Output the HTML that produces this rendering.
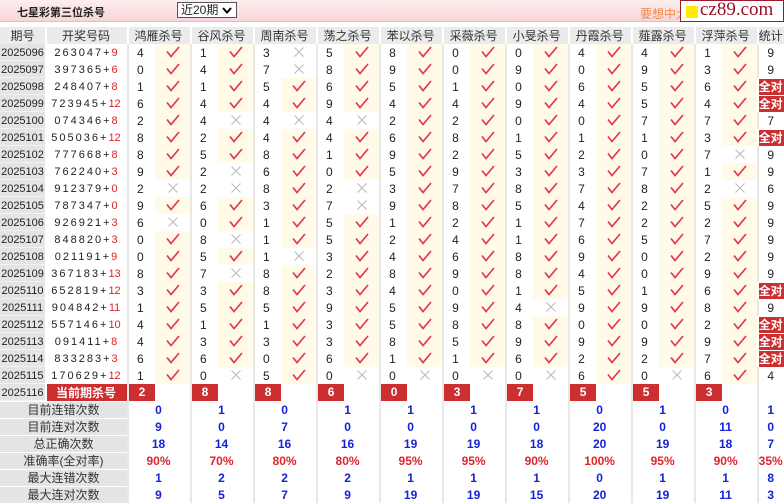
<!DOCTYPE html>
<html><head><meta charset="utf-8">
<style>
*{margin:0;padding:0;box-sizing:border-box}
body{width:784px;height:503px;overflow:hidden;background:#fff;font-family:"Liberation Sans","Noto Sans CJK SC",sans-serif;font-size:12px;color:#222;position:relative}
.top{position:absolute;left:0;top:0;width:784px;height:22px;background:linear-gradient(#fdeeee,#f6d6d8);border-bottom:1px solid #e9b9bd}
.title{position:absolute;left:17px;top:4px;font-weight:bold;font-size:11px;color:#222}
.sel{position:absolute;left:177px;top:2px;width:60px;height:16px;border:1px solid #555;background:#fff;font-size:12px;line-height:14px;padding-left:3px}
.sel svg{position:absolute;right:4px;top:4px}
.ad{position:absolute;left:640px;top:5px;color:#f08a4a;font-size:12px}
.logo{position:absolute;left:680px;top:0;width:104px;height:22px;border:1px solid #9a1b2c;background:#fff;overflow:hidden}
.logo i{position:absolute;left:5px;top:5px;width:12px;height:12px;background:#ffee00}
.logo span{position:absolute;left:19px;top:-1px;font-family:"Liberation Serif",serif;font-size:19px;color:#9a1024;line-height:20px}
table{position:absolute;left:0;top:27px;border-collapse:collapse;table-layout:fixed;width:784px}
tr{height:17px}
td,th{height:17px;padding:0;white-space:nowrap;overflow:hidden;line-height:16px;font-size:12px}
th{font-weight:normal;background:#ebebeb;color:#333;box-shadow:inset 2px 0 0 #fff}
.q{background:#e4e4e4;text-align:center;font-size:11px;box-shadow:inset 0 -1px 0 #f3f3f3}
.k{text-align:center;font-size:11px;letter-spacing:2px}
.k i{font-style:normal;color:#d22;letter-spacing:0}
.n{padding-left:10px;box-shadow:inset 2px 0 0 #e8e8e6}
.y{background:#fffbe8;text-align:center}
.x{text-align:center}
svg.m{display:inline-block;vertical-align:middle;margin-top:-2px}
.t{text-align:center;box-shadow:inset 2px 0 0 #e8e8e6}
.a{background:#cc2f2f;color:#fff;font-weight:bold;text-align:center;box-shadow:inset 2px 1px 0 #fff}
.cur{background:#cc2f2f;color:#fff;font-weight:bold;text-align:center;box-shadow:inset 2px 0 0 #fff}
.kn{box-shadow:inset 2px 0 0 #e8e8e6;padding-left:2px}
.kn b{display:block;background:#cc2f2f;color:#fff;width:26px;text-align:center;height:17px;line-height:17px}
.lab{background:#e4e4e4;text-align:center;box-shadow:inset 0 1px 0 #fff;color:#333}
.v{text-align:center;font-weight:bold;color:#1522d6;box-shadow:inset 2px 0 0 #e8e8e6}
.r{color:#e0242a}
</style></head><body>
<svg width="0" height="0" style="position:absolute">
<symbol id="c" viewBox="0 0 14 12"><path d="M1 5.5 L5 10.5 L13 1" fill="none" stroke="#e4384e" stroke-width="1.7"/></symbol>
<symbol id="w" viewBox="0 0 12 12"><path d="M1.5 1.5 L10.5 10.5 M10.5 1.5 L1.5 10.5" fill="none" stroke="#b8b8b8" stroke-width="1"/></symbol>
</svg>
<div class="top"><div class="title">七星彩第三位杀号</div><div class="sel">近20期<svg width="10" height="7"><path d="M1 1 L5 5.5 L9 1" fill="none" stroke="#000" stroke-width="2"/></svg></div><div class="ad">要想中大</div><div class="logo"><i></i><span>cz89.com</span></div></div>
<table>
<colgroup><col style="width:45px"><col style="width:82px"><col style="width:28px"><col style="width:35px"><col style="width:28px"><col style="width:35px"><col style="width:28px"><col style="width:35px"><col style="width:28px"><col style="width:35px"><col style="width:28px"><col style="width:35px"><col style="width:28px"><col style="width:35px"><col style="width:28px"><col style="width:35px"><col style="width:28px"><col style="width:35px"><col style="width:28px"><col style="width:35px"><col style="width:28px"><col style="width:35px"><col style="width:27px"></colgroup>
<tr><th style="box-shadow:none">期号</th><th>开奖号码</th><th colspan="2">鸿雁杀号</th><th colspan="2">谷风杀号</th><th colspan="2">周南杀号</th><th colspan="2">荡之杀号</th><th colspan="2">苯以杀号</th><th colspan="2">采薇杀号</th><th colspan="2">小旻杀号</th><th colspan="2">丹霞杀号</th><th colspan="2">薤露杀号</th><th colspan="2">浮萍杀号</th><th>统计</th></tr>
<tr><td class="q">2025096</td><td class="k">263047+<i>9</i></td><td class="n">4</td><td class="y"><svg class="m" width="14" height="12"><use href="#c"/></svg></td><td class="n">1</td><td class="y"><svg class="m" width="14" height="12"><use href="#c"/></svg></td><td class="n">3</td><td class="x"><svg class="m" width="12" height="12"><use href="#w"/></svg></td><td class="n">5</td><td class="y"><svg class="m" width="14" height="12"><use href="#c"/></svg></td><td class="n">8</td><td class="y"><svg class="m" width="14" height="12"><use href="#c"/></svg></td><td class="n">0</td><td class="y"><svg class="m" width="14" height="12"><use href="#c"/></svg></td><td class="n">0</td><td class="y"><svg class="m" width="14" height="12"><use href="#c"/></svg></td><td class="n">4</td><td class="y"><svg class="m" width="14" height="12"><use href="#c"/></svg></td><td class="n">4</td><td class="y"><svg class="m" width="14" height="12"><use href="#c"/></svg></td><td class="n">1</td><td class="y"><svg class="m" width="14" height="12"><use href="#c"/></svg></td><td class="t">9</td></tr>
<tr><td class="q">2025097</td><td class="k">397365+<i>6</i></td><td class="n">0</td><td class="y"><svg class="m" width="14" height="12"><use href="#c"/></svg></td><td class="n">4</td><td class="y"><svg class="m" width="14" height="12"><use href="#c"/></svg></td><td class="n">7</td><td class="x"><svg class="m" width="12" height="12"><use href="#w"/></svg></td><td class="n">8</td><td class="y"><svg class="m" width="14" height="12"><use href="#c"/></svg></td><td class="n">9</td><td class="y"><svg class="m" width="14" height="12"><use href="#c"/></svg></td><td class="n">0</td><td class="y"><svg class="m" width="14" height="12"><use href="#c"/></svg></td><td class="n">9</td><td class="y"><svg class="m" width="14" height="12"><use href="#c"/></svg></td><td class="n">0</td><td class="y"><svg class="m" width="14" height="12"><use href="#c"/></svg></td><td class="n">9</td><td class="y"><svg class="m" width="14" height="12"><use href="#c"/></svg></td><td class="n">3</td><td class="y"><svg class="m" width="14" height="12"><use href="#c"/></svg></td><td class="t">9</td></tr>
<tr><td class="q">2025098</td><td class="k">248407+<i>8</i></td><td class="n">1</td><td class="y"><svg class="m" width="14" height="12"><use href="#c"/></svg></td><td class="n">1</td><td class="y"><svg class="m" width="14" height="12"><use href="#c"/></svg></td><td class="n">5</td><td class="y"><svg class="m" width="14" height="12"><use href="#c"/></svg></td><td class="n">6</td><td class="y"><svg class="m" width="14" height="12"><use href="#c"/></svg></td><td class="n">5</td><td class="y"><svg class="m" width="14" height="12"><use href="#c"/></svg></td><td class="n">1</td><td class="y"><svg class="m" width="14" height="12"><use href="#c"/></svg></td><td class="n">0</td><td class="y"><svg class="m" width="14" height="12"><use href="#c"/></svg></td><td class="n">6</td><td class="y"><svg class="m" width="14" height="12"><use href="#c"/></svg></td><td class="n">5</td><td class="y"><svg class="m" width="14" height="12"><use href="#c"/></svg></td><td class="n">6</td><td class="y"><svg class="m" width="14" height="12"><use href="#c"/></svg></td><td class="a">全对</td></tr>
<tr><td class="q">2025099</td><td class="k">723945+<i>12</i></td><td class="n">6</td><td class="y"><svg class="m" width="14" height="12"><use href="#c"/></svg></td><td class="n">4</td><td class="y"><svg class="m" width="14" height="12"><use href="#c"/></svg></td><td class="n">4</td><td class="y"><svg class="m" width="14" height="12"><use href="#c"/></svg></td><td class="n">9</td><td class="y"><svg class="m" width="14" height="12"><use href="#c"/></svg></td><td class="n">4</td><td class="y"><svg class="m" width="14" height="12"><use href="#c"/></svg></td><td class="n">4</td><td class="y"><svg class="m" width="14" height="12"><use href="#c"/></svg></td><td class="n">9</td><td class="y"><svg class="m" width="14" height="12"><use href="#c"/></svg></td><td class="n">4</td><td class="y"><svg class="m" width="14" height="12"><use href="#c"/></svg></td><td class="n">5</td><td class="y"><svg class="m" width="14" height="12"><use href="#c"/></svg></td><td class="n">4</td><td class="y"><svg class="m" width="14" height="12"><use href="#c"/></svg></td><td class="a">全对</td></tr>
<tr><td class="q">2025100</td><td class="k">074346+<i>8</i></td><td class="n">2</td><td class="y"><svg class="m" width="14" height="12"><use href="#c"/></svg></td><td class="n">4</td><td class="x"><svg class="m" width="12" height="12"><use href="#w"/></svg></td><td class="n">4</td><td class="x"><svg class="m" width="12" height="12"><use href="#w"/></svg></td><td class="n">4</td><td class="x"><svg class="m" width="12" height="12"><use href="#w"/></svg></td><td class="n">2</td><td class="y"><svg class="m" width="14" height="12"><use href="#c"/></svg></td><td class="n">2</td><td class="y"><svg class="m" width="14" height="12"><use href="#c"/></svg></td><td class="n">0</td><td class="y"><svg class="m" width="14" height="12"><use href="#c"/></svg></td><td class="n">0</td><td class="y"><svg class="m" width="14" height="12"><use href="#c"/></svg></td><td class="n">7</td><td class="y"><svg class="m" width="14" height="12"><use href="#c"/></svg></td><td class="n">7</td><td class="y"><svg class="m" width="14" height="12"><use href="#c"/></svg></td><td class="t">7</td></tr>
<tr><td class="q">2025101</td><td class="k">505036+<i>12</i></td><td class="n">8</td><td class="y"><svg class="m" width="14" height="12"><use href="#c"/></svg></td><td class="n">2</td><td class="y"><svg class="m" width="14" height="12"><use href="#c"/></svg></td><td class="n">4</td><td class="y"><svg class="m" width="14" height="12"><use href="#c"/></svg></td><td class="n">4</td><td class="y"><svg class="m" width="14" height="12"><use href="#c"/></svg></td><td class="n">6</td><td class="y"><svg class="m" width="14" height="12"><use href="#c"/></svg></td><td class="n">8</td><td class="y"><svg class="m" width="14" height="12"><use href="#c"/></svg></td><td class="n">1</td><td class="y"><svg class="m" width="14" height="12"><use href="#c"/></svg></td><td class="n">1</td><td class="y"><svg class="m" width="14" height="12"><use href="#c"/></svg></td><td class="n">1</td><td class="y"><svg class="m" width="14" height="12"><use href="#c"/></svg></td><td class="n">3</td><td class="y"><svg class="m" width="14" height="12"><use href="#c"/></svg></td><td class="a">全对</td></tr>
<tr><td class="q">2025102</td><td class="k">777668+<i>8</i></td><td class="n">8</td><td class="y"><svg class="m" width="14" height="12"><use href="#c"/></svg></td><td class="n">5</td><td class="y"><svg class="m" width="14" height="12"><use href="#c"/></svg></td><td class="n">8</td><td class="y"><svg class="m" width="14" height="12"><use href="#c"/></svg></td><td class="n">1</td><td class="y"><svg class="m" width="14" height="12"><use href="#c"/></svg></td><td class="n">9</td><td class="y"><svg class="m" width="14" height="12"><use href="#c"/></svg></td><td class="n">2</td><td class="y"><svg class="m" width="14" height="12"><use href="#c"/></svg></td><td class="n">5</td><td class="y"><svg class="m" width="14" height="12"><use href="#c"/></svg></td><td class="n">2</td><td class="y"><svg class="m" width="14" height="12"><use href="#c"/></svg></td><td class="n">0</td><td class="y"><svg class="m" width="14" height="12"><use href="#c"/></svg></td><td class="n">7</td><td class="x"><svg class="m" width="12" height="12"><use href="#w"/></svg></td><td class="t">9</td></tr>
<tr><td class="q">2025103</td><td class="k">762240+<i>3</i></td><td class="n">9</td><td class="y"><svg class="m" width="14" height="12"><use href="#c"/></svg></td><td class="n">2</td><td class="x"><svg class="m" width="12" height="12"><use href="#w"/></svg></td><td class="n">6</td><td class="y"><svg class="m" width="14" height="12"><use href="#c"/></svg></td><td class="n">0</td><td class="y"><svg class="m" width="14" height="12"><use href="#c"/></svg></td><td class="n">5</td><td class="y"><svg class="m" width="14" height="12"><use href="#c"/></svg></td><td class="n">9</td><td class="y"><svg class="m" width="14" height="12"><use href="#c"/></svg></td><td class="n">3</td><td class="y"><svg class="m" width="14" height="12"><use href="#c"/></svg></td><td class="n">3</td><td class="y"><svg class="m" width="14" height="12"><use href="#c"/></svg></td><td class="n">7</td><td class="y"><svg class="m" width="14" height="12"><use href="#c"/></svg></td><td class="n">1</td><td class="y"><svg class="m" width="14" height="12"><use href="#c"/></svg></td><td class="t">9</td></tr>
<tr><td class="q">2025104</td><td class="k">912379+<i>0</i></td><td class="n">2</td><td class="x"><svg class="m" width="12" height="12"><use href="#w"/></svg></td><td class="n">2</td><td class="x"><svg class="m" width="12" height="12"><use href="#w"/></svg></td><td class="n">8</td><td class="y"><svg class="m" width="14" height="12"><use href="#c"/></svg></td><td class="n">2</td><td class="x"><svg class="m" width="12" height="12"><use href="#w"/></svg></td><td class="n">3</td><td class="y"><svg class="m" width="14" height="12"><use href="#c"/></svg></td><td class="n">7</td><td class="y"><svg class="m" width="14" height="12"><use href="#c"/></svg></td><td class="n">8</td><td class="y"><svg class="m" width="14" height="12"><use href="#c"/></svg></td><td class="n">7</td><td class="y"><svg class="m" width="14" height="12"><use href="#c"/></svg></td><td class="n">8</td><td class="y"><svg class="m" width="14" height="12"><use href="#c"/></svg></td><td class="n">2</td><td class="x"><svg class="m" width="12" height="12"><use href="#w"/></svg></td><td class="t">6</td></tr>
<tr><td class="q">2025105</td><td class="k">787347+<i>0</i></td><td class="n">9</td><td class="y"><svg class="m" width="14" height="12"><use href="#c"/></svg></td><td class="n">6</td><td class="y"><svg class="m" width="14" height="12"><use href="#c"/></svg></td><td class="n">3</td><td class="y"><svg class="m" width="14" height="12"><use href="#c"/></svg></td><td class="n">7</td><td class="x"><svg class="m" width="12" height="12"><use href="#w"/></svg></td><td class="n">9</td><td class="y"><svg class="m" width="14" height="12"><use href="#c"/></svg></td><td class="n">8</td><td class="y"><svg class="m" width="14" height="12"><use href="#c"/></svg></td><td class="n">5</td><td class="y"><svg class="m" width="14" height="12"><use href="#c"/></svg></td><td class="n">4</td><td class="y"><svg class="m" width="14" height="12"><use href="#c"/></svg></td><td class="n">2</td><td class="y"><svg class="m" width="14" height="12"><use href="#c"/></svg></td><td class="n">5</td><td class="y"><svg class="m" width="14" height="12"><use href="#c"/></svg></td><td class="t">9</td></tr>
<tr><td class="q">2025106</td><td class="k">926921+<i>3</i></td><td class="n">6</td><td class="x"><svg class="m" width="12" height="12"><use href="#w"/></svg></td><td class="n">0</td><td class="y"><svg class="m" width="14" height="12"><use href="#c"/></svg></td><td class="n">1</td><td class="y"><svg class="m" width="14" height="12"><use href="#c"/></svg></td><td class="n">5</td><td class="y"><svg class="m" width="14" height="12"><use href="#c"/></svg></td><td class="n">1</td><td class="y"><svg class="m" width="14" height="12"><use href="#c"/></svg></td><td class="n">2</td><td class="y"><svg class="m" width="14" height="12"><use href="#c"/></svg></td><td class="n">1</td><td class="y"><svg class="m" width="14" height="12"><use href="#c"/></svg></td><td class="n">7</td><td class="y"><svg class="m" width="14" height="12"><use href="#c"/></svg></td><td class="n">2</td><td class="y"><svg class="m" width="14" height="12"><use href="#c"/></svg></td><td class="n">2</td><td class="y"><svg class="m" width="14" height="12"><use href="#c"/></svg></td><td class="t">9</td></tr>
<tr><td class="q">2025107</td><td class="k">848820+<i>3</i></td><td class="n">0</td><td class="y"><svg class="m" width="14" height="12"><use href="#c"/></svg></td><td class="n">8</td><td class="x"><svg class="m" width="12" height="12"><use href="#w"/></svg></td><td class="n">1</td><td class="y"><svg class="m" width="14" height="12"><use href="#c"/></svg></td><td class="n">5</td><td class="y"><svg class="m" width="14" height="12"><use href="#c"/></svg></td><td class="n">2</td><td class="y"><svg class="m" width="14" height="12"><use href="#c"/></svg></td><td class="n">4</td><td class="y"><svg class="m" width="14" height="12"><use href="#c"/></svg></td><td class="n">1</td><td class="y"><svg class="m" width="14" height="12"><use href="#c"/></svg></td><td class="n">6</td><td class="y"><svg class="m" width="14" height="12"><use href="#c"/></svg></td><td class="n">5</td><td class="y"><svg class="m" width="14" height="12"><use href="#c"/></svg></td><td class="n">7</td><td class="y"><svg class="m" width="14" height="12"><use href="#c"/></svg></td><td class="t">9</td></tr>
<tr><td class="q">2025108</td><td class="k">021191+<i>9</i></td><td class="n">0</td><td class="y"><svg class="m" width="14" height="12"><use href="#c"/></svg></td><td class="n">5</td><td class="y"><svg class="m" width="14" height="12"><use href="#c"/></svg></td><td class="n">1</td><td class="x"><svg class="m" width="12" height="12"><use href="#w"/></svg></td><td class="n">3</td><td class="y"><svg class="m" width="14" height="12"><use href="#c"/></svg></td><td class="n">4</td><td class="y"><svg class="m" width="14" height="12"><use href="#c"/></svg></td><td class="n">6</td><td class="y"><svg class="m" width="14" height="12"><use href="#c"/></svg></td><td class="n">8</td><td class="y"><svg class="m" width="14" height="12"><use href="#c"/></svg></td><td class="n">9</td><td class="y"><svg class="m" width="14" height="12"><use href="#c"/></svg></td><td class="n">0</td><td class="y"><svg class="m" width="14" height="12"><use href="#c"/></svg></td><td class="n">2</td><td class="y"><svg class="m" width="14" height="12"><use href="#c"/></svg></td><td class="t">9</td></tr>
<tr><td class="q">2025109</td><td class="k">367183+<i>13</i></td><td class="n">8</td><td class="y"><svg class="m" width="14" height="12"><use href="#c"/></svg></td><td class="n">7</td><td class="x"><svg class="m" width="12" height="12"><use href="#w"/></svg></td><td class="n">8</td><td class="y"><svg class="m" width="14" height="12"><use href="#c"/></svg></td><td class="n">2</td><td class="y"><svg class="m" width="14" height="12"><use href="#c"/></svg></td><td class="n">8</td><td class="y"><svg class="m" width="14" height="12"><use href="#c"/></svg></td><td class="n">9</td><td class="y"><svg class="m" width="14" height="12"><use href="#c"/></svg></td><td class="n">8</td><td class="y"><svg class="m" width="14" height="12"><use href="#c"/></svg></td><td class="n">4</td><td class="y"><svg class="m" width="14" height="12"><use href="#c"/></svg></td><td class="n">0</td><td class="y"><svg class="m" width="14" height="12"><use href="#c"/></svg></td><td class="n">9</td><td class="y"><svg class="m" width="14" height="12"><use href="#c"/></svg></td><td class="t">9</td></tr>
<tr><td class="q">2025110</td><td class="k">652819+<i>12</i></td><td class="n">3</td><td class="y"><svg class="m" width="14" height="12"><use href="#c"/></svg></td><td class="n">3</td><td class="y"><svg class="m" width="14" height="12"><use href="#c"/></svg></td><td class="n">8</td><td class="y"><svg class="m" width="14" height="12"><use href="#c"/></svg></td><td class="n">3</td><td class="y"><svg class="m" width="14" height="12"><use href="#c"/></svg></td><td class="n">4</td><td class="y"><svg class="m" width="14" height="12"><use href="#c"/></svg></td><td class="n">0</td><td class="y"><svg class="m" width="14" height="12"><use href="#c"/></svg></td><td class="n">1</td><td class="y"><svg class="m" width="14" height="12"><use href="#c"/></svg></td><td class="n">5</td><td class="y"><svg class="m" width="14" height="12"><use href="#c"/></svg></td><td class="n">1</td><td class="y"><svg class="m" width="14" height="12"><use href="#c"/></svg></td><td class="n">6</td><td class="y"><svg class="m" width="14" height="12"><use href="#c"/></svg></td><td class="a">全对</td></tr>
<tr><td class="q">2025111</td><td class="k">904842+<i>11</i></td><td class="n">1</td><td class="y"><svg class="m" width="14" height="12"><use href="#c"/></svg></td><td class="n">5</td><td class="y"><svg class="m" width="14" height="12"><use href="#c"/></svg></td><td class="n">5</td><td class="y"><svg class="m" width="14" height="12"><use href="#c"/></svg></td><td class="n">9</td><td class="y"><svg class="m" width="14" height="12"><use href="#c"/></svg></td><td class="n">5</td><td class="y"><svg class="m" width="14" height="12"><use href="#c"/></svg></td><td class="n">9</td><td class="y"><svg class="m" width="14" height="12"><use href="#c"/></svg></td><td class="n">4</td><td class="x"><svg class="m" width="12" height="12"><use href="#w"/></svg></td><td class="n">9</td><td class="y"><svg class="m" width="14" height="12"><use href="#c"/></svg></td><td class="n">9</td><td class="y"><svg class="m" width="14" height="12"><use href="#c"/></svg></td><td class="n">8</td><td class="y"><svg class="m" width="14" height="12"><use href="#c"/></svg></td><td class="t">9</td></tr>
<tr><td class="q">2025112</td><td class="k">557146+<i>10</i></td><td class="n">4</td><td class="y"><svg class="m" width="14" height="12"><use href="#c"/></svg></td><td class="n">1</td><td class="y"><svg class="m" width="14" height="12"><use href="#c"/></svg></td><td class="n">1</td><td class="y"><svg class="m" width="14" height="12"><use href="#c"/></svg></td><td class="n">3</td><td class="y"><svg class="m" width="14" height="12"><use href="#c"/></svg></td><td class="n">5</td><td class="y"><svg class="m" width="14" height="12"><use href="#c"/></svg></td><td class="n">8</td><td class="y"><svg class="m" width="14" height="12"><use href="#c"/></svg></td><td class="n">8</td><td class="y"><svg class="m" width="14" height="12"><use href="#c"/></svg></td><td class="n">0</td><td class="y"><svg class="m" width="14" height="12"><use href="#c"/></svg></td><td class="n">0</td><td class="y"><svg class="m" width="14" height="12"><use href="#c"/></svg></td><td class="n">2</td><td class="y"><svg class="m" width="14" height="12"><use href="#c"/></svg></td><td class="a">全对</td></tr>
<tr><td class="q">2025113</td><td class="k">091411+<i>8</i></td><td class="n">4</td><td class="y"><svg class="m" width="14" height="12"><use href="#c"/></svg></td><td class="n">3</td><td class="y"><svg class="m" width="14" height="12"><use href="#c"/></svg></td><td class="n">3</td><td class="y"><svg class="m" width="14" height="12"><use href="#c"/></svg></td><td class="n">3</td><td class="y"><svg class="m" width="14" height="12"><use href="#c"/></svg></td><td class="n">8</td><td class="y"><svg class="m" width="14" height="12"><use href="#c"/></svg></td><td class="n">5</td><td class="y"><svg class="m" width="14" height="12"><use href="#c"/></svg></td><td class="n">9</td><td class="y"><svg class="m" width="14" height="12"><use href="#c"/></svg></td><td class="n">9</td><td class="y"><svg class="m" width="14" height="12"><use href="#c"/></svg></td><td class="n">9</td><td class="y"><svg class="m" width="14" height="12"><use href="#c"/></svg></td><td class="n">9</td><td class="y"><svg class="m" width="14" height="12"><use href="#c"/></svg></td><td class="a">全对</td></tr>
<tr><td class="q">2025114</td><td class="k">833283+<i>3</i></td><td class="n">6</td><td class="y"><svg class="m" width="14" height="12"><use href="#c"/></svg></td><td class="n">6</td><td class="y"><svg class="m" width="14" height="12"><use href="#c"/></svg></td><td class="n">0</td><td class="y"><svg class="m" width="14" height="12"><use href="#c"/></svg></td><td class="n">6</td><td class="y"><svg class="m" width="14" height="12"><use href="#c"/></svg></td><td class="n">1</td><td class="y"><svg class="m" width="14" height="12"><use href="#c"/></svg></td><td class="n">1</td><td class="y"><svg class="m" width="14" height="12"><use href="#c"/></svg></td><td class="n">6</td><td class="y"><svg class="m" width="14" height="12"><use href="#c"/></svg></td><td class="n">2</td><td class="y"><svg class="m" width="14" height="12"><use href="#c"/></svg></td><td class="n">2</td><td class="y"><svg class="m" width="14" height="12"><use href="#c"/></svg></td><td class="n">7</td><td class="y"><svg class="m" width="14" height="12"><use href="#c"/></svg></td><td class="a">全对</td></tr>
<tr><td class="q">2025115</td><td class="k">170629+<i>12</i></td><td class="n">1</td><td class="y"><svg class="m" width="14" height="12"><use href="#c"/></svg></td><td class="n">0</td><td class="x"><svg class="m" width="12" height="12"><use href="#w"/></svg></td><td class="n">5</td><td class="y"><svg class="m" width="14" height="12"><use href="#c"/></svg></td><td class="n">0</td><td class="x"><svg class="m" width="12" height="12"><use href="#w"/></svg></td><td class="n">0</td><td class="x"><svg class="m" width="12" height="12"><use href="#w"/></svg></td><td class="n">0</td><td class="x"><svg class="m" width="12" height="12"><use href="#w"/></svg></td><td class="n">0</td><td class="x"><svg class="m" width="12" height="12"><use href="#w"/></svg></td><td class="n">6</td><td class="y"><svg class="m" width="14" height="12"><use href="#c"/></svg></td><td class="n">0</td><td class="x"><svg class="m" width="12" height="12"><use href="#w"/></svg></td><td class="n">6</td><td class="y"><svg class="m" width="14" height="12"><use href="#c"/></svg></td><td class="t">4</td></tr>
<tr><td class="q">2025116</td><td class="cur">当前期杀号</td><td class="kn"><b>2</b></td><td></td><td class="kn"><b>8</b></td><td></td><td class="kn"><b>8</b></td><td></td><td class="kn"><b>6</b></td><td></td><td class="kn"><b>0</b></td><td></td><td class="kn"><b>3</b></td><td></td><td class="kn"><b>7</b></td><td></td><td class="kn"><b>5</b></td><td></td><td class="kn"><b>5</b></td><td></td><td class="kn"><b>3</b></td><td></td><td class="t"></td></tr>
<tr><td class="lab" colspan="2">目前连错次数</td><td class="v" colspan="2">0</td><td class="v" colspan="2">1</td><td class="v" colspan="2">0</td><td class="v" colspan="2">1</td><td class="v" colspan="2">1</td><td class="v" colspan="2">1</td><td class="v" colspan="2">1</td><td class="v" colspan="2">0</td><td class="v" colspan="2">1</td><td class="v" colspan="2">0</td><td class="v">1</td></tr>
<tr><td class="lab" colspan="2">目前连对次数</td><td class="v" colspan="2">9</td><td class="v" colspan="2">0</td><td class="v" colspan="2">7</td><td class="v" colspan="2">0</td><td class="v" colspan="2">0</td><td class="v" colspan="2">0</td><td class="v" colspan="2">0</td><td class="v" colspan="2">20</td><td class="v" colspan="2">0</td><td class="v" colspan="2">11</td><td class="v">0</td></tr>
<tr><td class="lab" colspan="2">总正确次数</td><td class="v" colspan="2">18</td><td class="v" colspan="2">14</td><td class="v" colspan="2">16</td><td class="v" colspan="2">16</td><td class="v" colspan="2">19</td><td class="v" colspan="2">19</td><td class="v" colspan="2">18</td><td class="v" colspan="2">20</td><td class="v" colspan="2">19</td><td class="v" colspan="2">18</td><td class="v">7</td></tr>
<tr><td class="lab" colspan="2">准确率(全对率)</td><td class="v r" colspan="2">90%</td><td class="v r" colspan="2">70%</td><td class="v r" colspan="2">80%</td><td class="v r" colspan="2">80%</td><td class="v r" colspan="2">95%</td><td class="v r" colspan="2">95%</td><td class="v r" colspan="2">90%</td><td class="v r" colspan="2">100%</td><td class="v r" colspan="2">95%</td><td class="v r" colspan="2">90%</td><td class="v r">35%</td></tr>
<tr><td class="lab" colspan="2">最大连错次数</td><td class="v" colspan="2">1</td><td class="v" colspan="2">2</td><td class="v" colspan="2">2</td><td class="v" colspan="2">2</td><td class="v" colspan="2">1</td><td class="v" colspan="2">1</td><td class="v" colspan="2">1</td><td class="v" colspan="2">0</td><td class="v" colspan="2">1</td><td class="v" colspan="2">1</td><td class="v">8</td></tr>
<tr><td class="lab" colspan="2">最大连对次数</td><td class="v" colspan="2">9</td><td class="v" colspan="2">5</td><td class="v" colspan="2">7</td><td class="v" colspan="2">9</td><td class="v" colspan="2">19</td><td class="v" colspan="2">19</td><td class="v" colspan="2">15</td><td class="v" colspan="2">20</td><td class="v" colspan="2">19</td><td class="v" colspan="2">11</td><td class="v">3</td></tr>
</table>
</body></html>
